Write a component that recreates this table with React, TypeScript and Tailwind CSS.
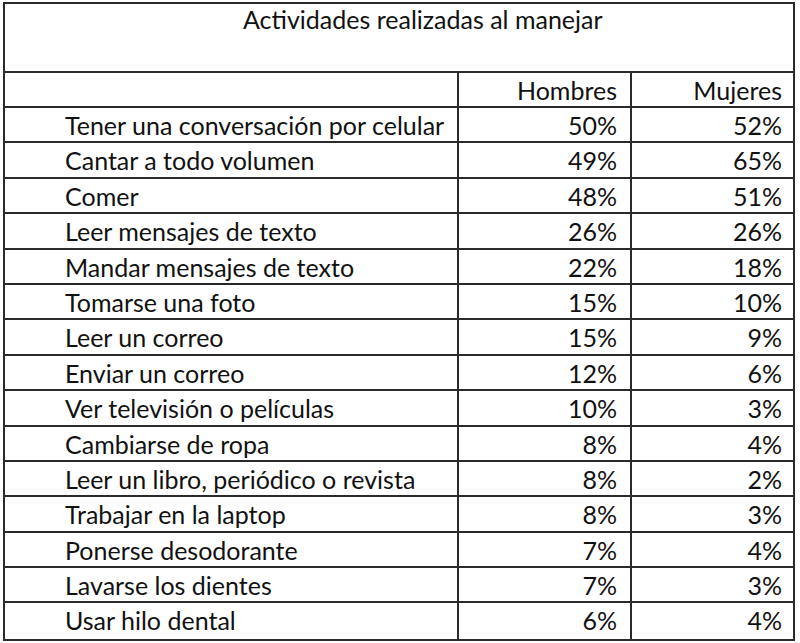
import React from "react";

const rows: [string, string, string][] = [
  ["Tener una conversación por celular", "50%", "52%"],
  ["Cantar a todo volumen", "49%", "65%"],
  ["Comer", "48%", "51%"],
  ["Leer mensajes de texto", "26%", "26%"],
  ["Mandar mensajes de texto", "22%", "18%"],
  ["Tomarse una foto", "15%", "10%"],
  ["Leer un correo", "15%", "9%"],
  ["Enviar un correo", "12%", "6%"],
  ["Ver televisión o películas", "10%", "3%"],
  ["Cambiarse de ropa", "8%", "4%"],
  ["Leer un libro, periódico o revista", "8%", "2%"],
  ["Trabajar en la laptop", "8%", "3%"],
  ["Ponerse desodorante", "7%", "4%"],
  ["Lavarse los dientes", "7%", "3%"],
  ["Usar hilo dental", "6%", "4%"],
];

export default function App() {
  return (
    <div className="w-[800px] h-[643px] bg-white pt-[2px] pl-[3px] text-[#111]" style={{ fontFamily: "Lato, 'Open Sans', sans-serif" }}>
      <div className="w-[792px] border-2 border-[#2a2a2a]">
        <div className="h-[69px] border-b-2 border-[#2a2a2a] pl-[238px] pt-[0px] text-[25px] leading-[30px] whitespace-nowrap">
          Actividades realizadas al manejar
        </div>
        <div className="grid grid-cols-[454px_173px_161px] h-[35px] border-b-2 border-[#2a2a2a] text-[25px] leading-[33px]">
          <div className="border-r-2 border-[#2a2a2a]" />
          <div className="border-r-2 border-[#2a2a2a] text-right pr-[13px] pt-[1px]">Hombres</div>
          <div className="text-right pr-[11px] pt-[1px]">Mujeres</div>
        </div>
        {rows.map((r, i) => (
          <div
            key={i}
            className={
              "grid grid-cols-[454px_173px_161px] h-[35.4px] text-[25px] leading-[33px] " +
              (i < rows.length - 1 ? "border-b-2 border-[#2a2a2a]" : "")
            }
          >
            <div className="border-r-2 border-[#2a2a2a] pl-[60px] pt-[1px] whitespace-nowrap">{r[0]}</div>
            <div className="border-r-2 border-[#2a2a2a] text-right pr-[13px] pt-[1px]">{r[1]}</div>
            <div className="text-right pr-[11px] pt-[1px]">{r[2]}</div>
          </div>
        ))}
      </div>
    </div>
  );
}
